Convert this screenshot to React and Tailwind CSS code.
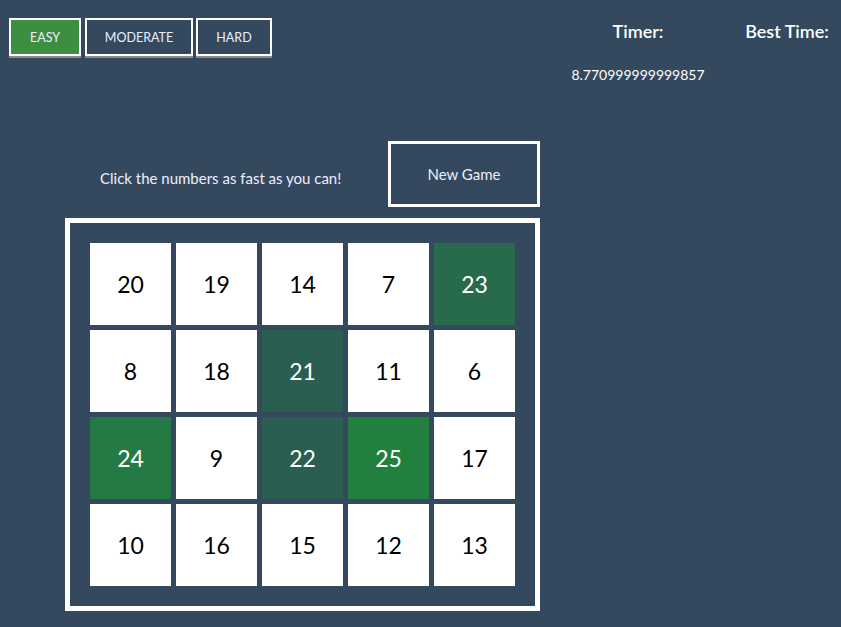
import React from "react";

const cells = [
  [20, "w"], [19, "w"], [14, "w"], [7, "w"], [23, "a"],
  [8, "w"], [18, "w"], [21, "b"], [11, "w"], [6, "w"],
  [24, "c"], [9, "w"], [22, "b"], [25, "d"], [17, "w"],
  [10, "w"], [16, "w"], [15, "w"], [12, "w"], [13, "w"],
];

const cls = {
  w: "bg-white text-black",
  a: "bg-[#276b4c] text-white",
  b: "bg-[#2a5e50] text-white",
  c: "bg-[#247a45] text-white",
  d: "bg-[#22803f] text-white",
};

export default function App() {
  return (
    <div
      className="w-[841px] h-[627px] overflow-hidden bg-[#34495e] text-white"
      style={{ fontFamily: "Lato, 'Noto Sans', sans-serif" }}
    >
      <div className="h-[141px] flex items-start">
        <div className="flex pt-[18px] pl-[9px] gap-[4px]">
          <button className="w-[72px] h-[38px] pt-[2px] bg-[#3e8e41] border-2 border-white text-[12.5px] text-[#eef] shadow-[0_2px_0_#8a8a8a]">
            EASY
          </button>
          <button className="w-[108px] h-[38px] pt-[2px] border-2 border-white text-[12.5px] text-[#eef] shadow-[0_2px_0_#8a8a8a]">
            MODERATE
          </button>
          <button className="ml-[-1px] w-[76px] h-[38px] pt-[2px] border-2 border-white text-[12.5px] text-[#eef] shadow-[0_2px_0_#8a8a8a]">
            HARD
          </button>
        </div>
        <div className="ml-auto flex pr-[4px] pt-[20px]">
          <div className="w-[148px] flex flex-col items-center">
            <div className="text-[18px] font-semibold leading-[22px]">Timer:</div>
            <div className="mt-[24px] text-[14px] leading-[18px]">8.770999999999857</div>
          </div>
          <div className="ml-[25px] w-[100px] flex flex-col items-center">
            <div className="text-[18px] font-semibold leading-[22px] whitespace-nowrap">Best Time:</div>
          </div>
        </div>
      </div>
      <div className="ml-[65px] w-[475px]">
        <div className="flex items-center justify-between h-[66px]">
          <div className="pl-[35px] pt-[8px] text-[15px] text-[#eef]">Click the numbers as fast as you can!</div>
          <button className="w-[152px] h-[66px] border-[3px] border-white text-[15px] text-[#eef]">
            New Game
          </button>
        </div>
        <div className="mt-[11px] border-[5px] border-white p-[20px] grid grid-cols-[repeat(5,81px)] gap-[5px]">
          {cells.map(([n, c]) => (
            <div
              key={n}
              className={`h-[82px] flex items-center justify-center text-[23px] ${cls[c]}`}
            >
              {n}
            </div>
          ))}
        </div>
      </div>
    </div>
  );
}
